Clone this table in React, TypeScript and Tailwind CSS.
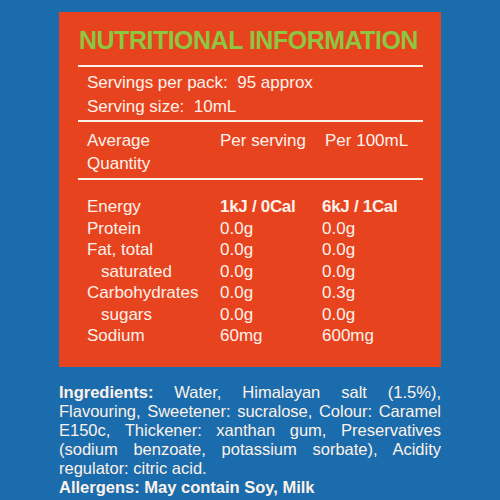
import React from "react";

const rows = [
  { label: "Energy", serving: "1kJ / 0Cal", per100: "6kJ / 1Cal", bold: true },
  { label: "Protein", serving: "0.0g", per100: "0.0g" },
  { label: "Fat, total", serving: "0.0g", per100: "0.0g" },
  { label: "saturated", serving: "0.0g", per100: "0.0g", indent: true },
  { label: "Carbohydrates", serving: "0.0g", per100: "0.3g" },
  { label: "sugars", serving: "0.0g", per100: "0.0g", indent: true },
  { label: "Sodium", serving: "60mg", per100: "600mg" },
];

export default function App() {
  return (
    <div
      className="w-[500px] h-[500px] overflow-hidden bg-[#1b6cac] text-[#fdf2ea] flex flex-col items-center"
      style={{ fontFamily: '"Liberation Sans", Arial, sans-serif' }}
    >
      {/* Nutrition panel */}
      <div className="mt-[12px] w-[382px] bg-[#e8431f] pl-[19px] pr-[18px] pt-[14px] pb-[20px]">
        <h1 className="text-[25px] leading-[28px] font-bold text-[#8dc63f] tracking-[-0.5px] pl-[1px]">
          NUTRITIONAL INFORMATION
        </h1>
        <div className="mt-[11px] h-[2px] bg-[#fdf2ea]" />

        <div className="pl-[9px] pt-[4px] pb-[2px] text-[17px] leading-[23.5px]">
          <p>Servings per pack:&nbsp; 95 approx</p>
          <p>Serving size:&nbsp; 10mL</p>
        </div>
        <div className="h-[2px] bg-[#fdf2ea]" />

        <div className="pl-[9px] pt-[7px] pb-[3px] text-[17px] leading-[23px] grid grid-cols-[133px_105px_1fr]">
          <p>
            Average
            <br />
            Quantity
          </p>
          <p>Per serving</p>
          <p>Per 100mL</p>
        </div>
        <div className="h-[2px] bg-[#fdf2ea]" />

        <div className="pl-[9px] pt-[16px] text-[17px] leading-[21.5px]">
          {rows.map((r) => (
            <div key={r.label} className="grid grid-cols-[133px_102px_1fr]">
              <span className={r.indent ? "pl-[14px]" : ""}>{r.label}</span>
              <span className={r.bold ? "font-bold tracking-[-0.3px]" : ""}>{r.serving}</span>
              <span className={r.bold ? "font-bold tracking-[-0.3px]" : ""}>{r.per100}</span>
            </div>
          ))}
        </div>
      </div>

      {/* Ingredients */}
      <div className="mt-[16px] w-[382px] text-[16.5px] leading-[19px]">
        <p className="text-justify">
          <span className="font-bold">Ingredients:</span> Water, Himalayan salt (1.5%), Flavouring,
          Sweetener: sucralose, Colour: Caramel E150c, Thickener: xanthan gum, Preservatives (sodium
          benzoate, potassium sorbate), Acidity regulator: citric acid.
        </p>
        <p className="font-bold">Allergens: May contain Soy, Milk</p>
      </div>
    </div>
  );
}
